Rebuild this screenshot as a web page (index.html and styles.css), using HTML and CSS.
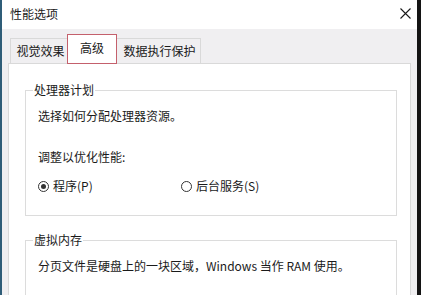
FILE: index.html
```html
<!DOCTYPE html>
<html>
<head>
    <meta charset="utf-8">
    <title>性能选项</title>
    <link rel="stylesheet" href="styles.css">
</head>
<body>
    <div class="window">
        <div class="frame-left"></div>
        <div class="main">
            <div class="titlebar">
                <span class="title">性能选项</span>
                <svg class="close" width="11" height="11" viewBox="0 0 11 11">
                    <path d="M0.5 0.5 L10.5 10.5 M10.5 0.5 L0.5 10.5" stroke="#1a1a1a" stroke-width="1.1" fill="none"/>
                </svg>
            </div>
            <div class="content">
                <div class="tabs">
                    <div class="tab tab-visual">视觉效果</div>
                    <div class="tab tab-active">高级</div>
                    <div class="tab tab-dep">数据执行保护</div>
                </div>
                <div class="panel">
                    <fieldset class="group group-cpu">
                        <legend>处理器计划</legend>
                        <p class="line first">选择如何分配处理器资源。</p>
                        <p class="line adjust">调整以优化性能:</p>
                        <div class="radios">
                            <label class="radio"><span class="dot checked"></span>程序(P)</label>
                            <label class="radio"><span class="dot"></span>后台服务(S)</label>
                        </div>
                    </fieldset>
                    <fieldset class="group group-mem">
                        <legend>虚拟内存</legend>
                        <p class="line first">分页文件是硬盘上的一块区域，Windows 当作 RAM 使用。</p>
                    </fieldset>
                </div>
            </div>
        </div>
        <div class="frame-right"></div>
    </div>
</body>
</html>
```

FILE: styles.css
```css
body {
    margin: 0;
    padding: 0;
    font-family: "Noto Sans CJK SC", "Noto Sans", sans-serif;
    font-size: 12px;
    color: #1a1a1a;
    overflow: hidden;
}
.window {
    display: flex;
    width: 421px;
    height: 295px;
    overflow: hidden;
}
.frame-left {
    width: 2px;
    background-color: #2f5d78;
}
.frame-right {
    width: 4px;
    background-color: #141414;
}
.main {
    flex: 1;
    display: flex;
    flex-direction: column;
    min-width: 0;
    overflow: hidden;
}
.titlebar {
    flex-shrink: 0;
    height: 29px;
    background-color: #ffffff;
    display: flex;
    align-items: center;
    justify-content: space-between;
    padding: 0 6px 0 8px;
}
.title {
    line-height: 16px;
    margin-top: -1px;
}
.close {
    margin-top: -3px;
}
.content {
    flex: 1;
    min-height: 0;
    background-color: #f0eff1;
    padding: 6px 6px 0 6px;
    display: flex;
    flex-direction: column;
}
.tabs {
    flex-shrink: 0;
    display: flex;
    align-items: flex-end;
    height: 29px;
    margin-bottom: -1px;
    padding-left: 2px;
    position: relative;
    z-index: 1;
}
.tab {
    height: 25px;
    line-height: 24px;
    text-align: center;
    border: 1px solid #d9d9d9;
    border-bottom: none;
    background-color: #f0eff1;
    box-sizing: border-box;
    margin-bottom: 1px;
}
.tab-visual {
    width: 57px;
    padding-left: 3px;
    border-right: none;
}
.tab-active {
    width: 50px;
    height: 30px;
    line-height: 26px;
    margin-bottom: 0;
    background-color: #ffffff;
    border: 1px solid #c4606c;
}
.tab-dep {
    width: 84px;
    padding-left: 2px;
    border-left: none;
}
.panel {
    flex: 1;
    min-height: 0;
    background-color: #ffffff;
    border: 1px solid #d9d9d9;
    border-bottom: none;
    padding: 18px 13px 0 16px;
}
.group {
    margin: 0;
    border: 1px solid #dcdcdc;
    padding: 0 0 0 12px;
}
.group legend {
    margin-left: -5px;
    padding: 0 1px;
    line-height: 16px;
}
.line {
    margin: 0;
    line-height: 16px;
}
.line.first {
    margin-top: 10px;
}
.line.adjust {
    margin-top: 25px;
}
.radios {
    display: grid;
    grid-template-columns: 143px auto;
    margin-top: 13px;
    margin-bottom: 21px;
}
.radio {
    display: flex;
    align-items: center;
    gap: 4px;
    line-height: 16px;
}
.dot {
    width: 11px;
    height: 11px;
    border: 1px solid #333333;
    border-radius: 50%;
    box-sizing: border-box;
    display: flex;
    align-items: center;
    justify-content: center;
}
.dot.checked::after {
    content: "";
    width: 5px;
    height: 5px;
    border-radius: 50%;
    background-color: #333333;
}
.group-mem {
    margin-top: 16px;
    height: 80px;
}
```
